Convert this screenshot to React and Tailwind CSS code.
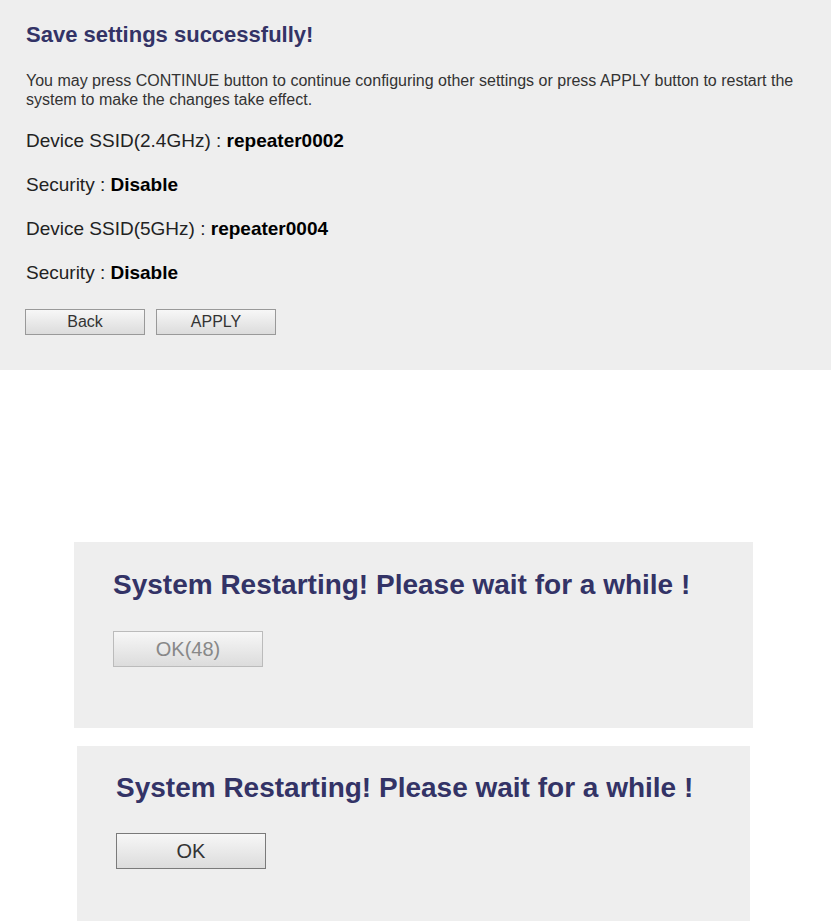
import React from 'react';

const GrayButton = ({ children, className = '', disabled = false }) => (
    <button
        type="button"
        disabled={disabled}
        className={`flex items-center justify-center border bg-gradient-to-b from-[#f7f7f7] to-[#dcdcdc] ${className}`}
    >
        {children}
    </button>
);

const App = () => {
    return (
        <div className="w-[831px] h-[921px] bg-white overflow-hidden font-['Liberation_Sans',Arial,sans-serif]">
            {/* save settings panel */}
            <div className="h-[370px] bg-[#eeeeee] pl-[26px] pt-[22px]">
                <h1 className="text-[22px] leading-[26px] font-bold text-[#333366]">Save settings successfully!</h1>
                <p className="mt-[23px] text-[16px] leading-[19px] text-[#333333] w-[790px]">
                    You may press CONTINUE button to continue configuring other settings or press APPLY button to restart the system to make the changes take effect.
                </p>
                <div className="mt-[21px] flex flex-col gap-[22px] text-[19px] leading-[22px] text-[#222222]">
                    <div>Device SSID(2.4GHz) : <span className="font-bold text-black">repeater0002</span></div>
                    <div>Security : <span className="font-bold text-black">Disable</span></div>
                    <div>Device SSID(5GHz) : <span className="font-bold text-black">repeater0004</span></div>
                    <div>Security : <span className="font-bold text-black">Disable</span></div>
                </div>
                <div className="mt-[25px] flex gap-[11px] -ml-px">
                    <GrayButton className="w-[120px] h-[26px] border-[#999999] text-[16px] text-[#333333]">Back</GrayButton>
                    <GrayButton className="w-[120px] h-[26px] border-[#999999] text-[16px] text-[#333333]">APPLY</GrayButton>
                </div>
            </div>

            {/* restarting, counting down */}
            <div className="mt-[172px] ml-[74px] w-[679px] h-[186px] bg-[#eeeeee] pl-[39px] pt-[27px]">
                <h2 className="text-[28px] leading-[32px] font-bold text-[#333366]">System Restarting! Please wait for a while !</h2>
                <GrayButton disabled className="mt-[30px] w-[150px] h-[36px] border-[#bbbbbb] text-[20px] text-[#888888]">OK(48)</GrayButton>
            </div>

            {/* restarting, done */}
            <div className="mt-[18px] ml-[77px] w-[673px] h-[175px] bg-[#eeeeee] pl-[39px] pt-[26px]">
                <h2 className="text-[28px] leading-[32px] font-bold text-[#333366]">System Restarting! Please wait for a while !</h2>
                <GrayButton className="mt-[29px] w-[150px] h-[36px] border-[#7a7a7a] text-[20px] text-[#333333]">OK</GrayButton>
            </div>
        </div>
    );
};

export default App;
